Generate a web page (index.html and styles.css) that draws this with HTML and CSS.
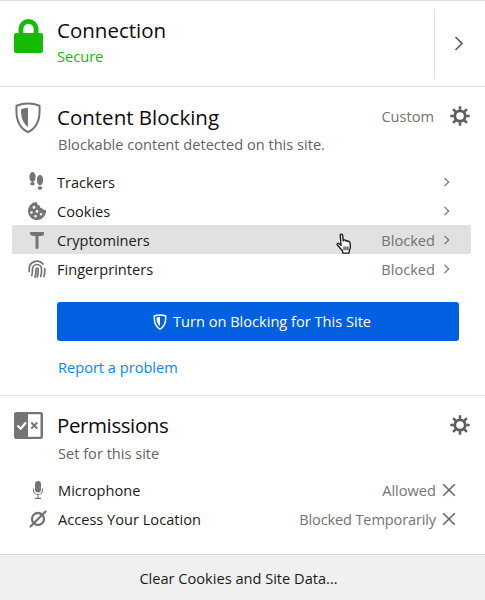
FILE: index.html
```html
<!DOCTYPE html>
<html lang="en">
<head>
<meta charset="utf-8">
<title>Site information</title>
<link rel="stylesheet" href="styles.css">
</head>
<body>
<svg class="defs" width="0" height="0" aria-hidden="true">
  <defs>
    <symbol id="gear" viewBox="0 0 20 20">
      <circle cx="10" cy="10" r="5.200" fill="none" stroke="#5c5c61" stroke-width="2.800"/>
      <path fill="none" stroke="#5c5c61" stroke-width="2.500" d="M10 .3v3.500M10 16.200v3.500M.3 10h3.500M16.200 10h3.500M3.100 3.100l2.500 2.500M14.400 14.400l2.500 2.500M16.900 3.100l-2.500 2.500M5.600 14.400l-2.500 2.500"/>
    </symbol>
    <symbol id="close" viewBox="0 0 14 14">
      <path fill="none" stroke="#66666b" stroke-width="1.600" d="M1.200 1.200l11.600 11.600M12.800 1.200L1.200 12.800"/>
    </symbol>
    <symbol id="chev" viewBox="0 0 8 12">
      <path fill="none" stroke="#737378" stroke-width="1.200" d="M1.500 1.800L5.700 6l-4.200 4.200"/>
    </symbol>
  </defs>
</svg>

<main class="panel">
  <section class="connection">
    <svg class="icon-lock" viewBox="0 0 29 34">
      <path fill="#12bc00" fill-rule="evenodd" d="M4.500 14V10a10 10 0 0 1 20 0v4H27a2 2 0 0 1 2 2v16a2 2 0 0 1-2 2H2a2 2 0 0 1-2-2V16a2 2 0 0 1 2-2zM9.300 14h10.400V10a5.200 5.200 0 0 0-10.400 0z"/>
    </svg>
    <div class="connection-text">
      <h2 class="heading">Connection</h2>
      <p class="secure">Secure</p>
    </div>
    <div class="connection-more">
      <svg class="chev-big" viewBox="0 0 10 15"><path fill="none" stroke="#5c5c61" stroke-width="1.700" d="M1.500 1L8 7.500 1.500 14"/></svg>
    </div>
  </section>

  <section class="blocking">
    <div class="title-row">
      <svg class="icon-head" viewBox="0 0 28 32">
        <path fill="none" stroke="#737378" stroke-width="2" d="M14 1.500c4 0 8 .8 11.500 2.200.5 10-.2 21-11.500 26.500C2.700 24.700 2 13.700 2.500 3.700 6 2.300 10 1.500 14 1.500z"/>
        <path fill="#737378" d="M14 6c-3 0-5 .4-7 1.200 0 6.800 1 13.300 7 17.800z"/>
      </svg>
      <h2 class="heading grow">Content Blocking</h2>
      <span class="muted custom">Custom</span>
      <svg class="gear"><use href="#gear"/></svg>
    </div>
    <p class="sub">Blockable content detected on this site.</p>

    <ul class="rows">
      <li class="row">
        <svg class="row-icon row-icon-tall" viewBox="0 0 18 20">
          <g fill="#737378">
            <ellipse cx="4.500" cy="5" rx="3.100" ry="5"/><ellipse cx="4.500" cy="11.800" rx="2.300" ry="1.700"/>
            <ellipse cx="12" cy="8" rx="3.100" ry="5.300"/><ellipse cx="12" cy="16" rx="2.300" ry="1.800"/>
          </g>
        </svg>
        <span class="row-label">Trackers</span>
        <svg class="chev"><use href="#chev"/></svg>
      </li>
      <li class="row">
        <svg class="row-icon" viewBox="0 0 18 18">
          <path fill="#737378" fill-rule="evenodd" d="M8.500.1c.3 2 1.500 3.200 3 3.500.2 1.800 1.500 3 3 3 .5 1 1.500 1.500 3.400 1.500A9 9 0 1 1 8.500.1zM6 3.800a1.500 1.500 0 1 0 0 3 1.500 1.500 0 0 0 0-3zM3.500 9.200a1.300 1.300 0 1 0 0 2.600 1.300 1.300 0 0 0 0-2.600zM9 8a1.400 1.400 0 1 0 0 2.800A1.400 1.400 0 0 0 9 8zM13 11a1.300 1.300 0 1 0 0 2.600 1.300 1.300 0 0 0 0-2.600zM7.500 13a1.300 1.300 0 1 0 0 2.600 1.300 1.300 0 0 0 0-2.600z"/>
        </svg>
        <span class="row-label">Cookies</span>
        <svg class="chev"><use href="#chev"/></svg>
      </li>
      <li class="row row-hover">
        <svg class="row-icon" viewBox="0 0 18 18">
          <path fill="#737378" d="M2 1h14v1.800c0 1.200-.8 2.200-2 2.200h-3.500v11.500a1.500 1.500 0 0 1-3 0V5H5.500C4 5 2.800 4.200 2 3z"/>
        </svg>
        <span class="row-label">Cryptominers</span>
        <span class="muted">Blocked</span>
        <svg class="chev"><use href="#chev"/></svg>
        <svg class="cursor" viewBox="0 0 20 24">
          <path fill="#fff" stroke="#1a1a1a" stroke-width="1.400" stroke-linejoin="round" d="M5 2.200c0-1.400 2.300-1.400 2.500 0l.7 6 .5-.6c.6-.8 1.900-.5 2.100.4l.2.500c.5-.7 1.800-.5 2.100.4.600-.5 1.700-.2 1.900.7l.6 3.600c.3 2-.3 3.500-1 5l-.5 2.800H7.800l-.5-2.500L2 12.500c-.8-1 .3-2.400 1.500-1.600l2.400 2z"/>
          <path fill="none" stroke="#1a1a1a" stroke-width="1.100" d="M9 14v4M11 14v4M13 14v4"/>
        </svg>
      </li>
      <li class="row">
        <svg class="row-icon" viewBox="0 0 18 18">
          <g fill="none" stroke="#737378" stroke-width="1.700" stroke-linecap="round">
            <path d="M1.200 11.500V9A7.800 7.800 0 0 1 15 4"/>
            <path d="M16.800 8.500V11c0 2-.4 4-1 5.500"/>
            <path d="M3.800 15.500c.6-1.500.7-4 .7-6.500a4.500 4.500 0 0 1 9 0v3c0 1.500-.3 3-.8 4.500"/>
            <path d="M7 17c.8-2 1.100-4.500 1.100-8a1 1 0 0 1 2 0v3c0 2-.4 3.500-1 5"/>
          </g>
        </svg>
        <span class="row-label">Fingerprinters</span>
        <span class="muted">Blocked</span>
        <svg class="chev"><use href="#chev"/></svg>
      </li>
    </ul>

    <button class="cta" type="button">
      <svg class="cta-icon" viewBox="0 0 14 16">
        <path fill="none" stroke="#fff" stroke-width="1.500" d="M7 .9c2 0 4 .4 5.700 1.100.3 5.300-.2 10.400-5.700 13.100C1.500 12.400 1 7.300 1.300 2 3 1.300 5 .9 7 .9z"/>
        <path fill="#fff" d="M7 3c-1.300 0-2.400.2-3.500.6 0 3.400.5 6.400 3.500 8.600z"/>
      </svg>
      Turn on Blocking for This Site
    </button>
    <a class="report" href="#">Report a problem</a>
  </section>

  <section class="permissions">
    <div class="title-row">
      <svg class="icon-perm" viewBox="0 0 29 27">
        <path fill="#737378" d="M2.500 0h24A2.500 2.500 0 0 1 29 2.500v22a2.500 2.500 0 0 1-2.500 2.500h-24A2.500 2.500 0 0 1 0 24.500v-22A2.500 2.500 0 0 1 2.500 0z"/>
        <rect fill="#fff" x="14" y="2.200" width="12.500" height="22.600"/>
        <path fill="none" stroke="#fff" stroke-width="2.200" d="M3.500 13.500l3.200 3.200L12 10.500"/>
        <path fill="none" stroke="#737378" stroke-width="1.800" d="M17.300 10.500l6 6M23.300 10.500l-6 6"/>
      </svg>
      <h2 class="heading grow heading-tight">Permissions</h2>
      <svg class="gear"><use href="#gear"/></svg>
    </div>
    <p class="sub">Set for this site</p>

    <ul class="rows perm-rows">
      <li class="row">
        <svg class="row-icon" viewBox="0 0 18 18">
          <rect x="6" y="0" width="6" height="11.500" rx="3" fill="#737378"/>
          <path fill="none" stroke="#737378" stroke-width="1.100" d="M4.500 7.500v1.500a4.500 4.500 0 0 0 9 0V7.500M9 13.500v3.500M6 17.400h6"/>
        </svg>
        <span class="row-label">Microphone</span>
        <span class="muted">Allowed</span>
        <svg class="x"><use href="#close"/></svg>
      </li>
      <li class="row">
        <svg class="row-icon" viewBox="0 0 18 18">
          <g fill="none" stroke="#737378" stroke-width="2.300">
            <circle cx="9" cy="9" r="6"/>
            <path stroke-linecap="round" d="M1.500 16.500L16.500 1.500"/>
          </g>
        </svg>
        <span class="row-label">Access Your Location</span>
        <span class="muted tight">Blocked Temporarily</span>
        <svg class="x"><use href="#close"/></svg>
      </li>
    </ul>
  </section>

  <footer class="footer">Clear Cookies and Site Data...</footer>
</main>
</body>
</html>
```

FILE: styles.css
```css
* { box-sizing: border-box; }

html, body {
  margin: 0;
  padding: 0;
  background: #fff;
}

body {
  font-family: "Open Sans", "Noto Sans", "Liberation Sans", sans-serif;
  font-size: 14.600px;
  color: #1a1a1a;
}

.defs { display: block; height: 0; }

.panel {
  width: 485px;
  height: 600px;
  display: flex;
  flex-direction: column;
  border-top: 1px solid #e0e0e1;
  overflow: hidden;
}

h2, p, ul { margin: 0; padding: 0; }
ul { list-style: none; }

.heading {
  font-size: 20.500px;
  font-weight: 400;
  line-height: 28px;
  color: #0c0c0d;
}

.heading-tight { letter-spacing: -.4px; }

.tight { letter-spacing: -.15px; }

.grow { flex: 1; }

.muted { color: #737373; }

/* Connection */
.connection {
  height: 86px;
  display: flex;
  align-items: center;
  padding-left: 14px;
  border-bottom: 1px solid #e0e0e1;
}

.icon-lock { width: 29px; height: 34px; margin-top: -15px; flex: none; }

.connection-text { flex: 1; margin-left: 14px; margin-top: -4px; }

.secure { color: #12bc00; line-height: 24px; }

.connection-more {
  width: 51px;
  height: 70px;
  border-left: 1px solid #e0e0e1;
  display: flex;
  align-items: center;
  justify-content: center;
  padding-right: 2px;
}

.chev-big { width: 10px; height: 15px; }

/* Content blocking */
.blocking {
  height: 309px;
  padding-top: 14px;
  border-bottom: 1px solid #e6e6e7;
  display: flex;
  flex-direction: column;
}

.title-row {
  display: flex;
  align-items: center;
  height: 32px;
  padding: 0 16px 0 14px;
}

.icon-head { width: 28px; height: 32px; margin: 1px 15px 0 0; flex: none; }

.custom { margin-right: 16px; margin-top: -2px; }

.gear { width: 20px; height: 20px; flex: none; margin-top: -2px; margin-right: -1px; }

.sub {
  margin-left: 58px;
  color: #636367;
  line-height: 22px;
}

.rows { padding: 0 14px 0 12px; margin-top: 12px; }

.row {
  position: relative;
  display: flex;
  align-items: center;
  height: 29px;
  padding: 0 20px 0 16px;
  border-radius: 2px;
}

.row-hover { background: #e1e1e2; }

.row-icon { width: 18px; height: 18px; flex: none; }

.row-icon-tall { height: 20px; }

.row-label { flex: 1; margin-left: 11px; color: #1a1a1a; }

.chev { width: 8px; height: 12px; margin-left: 8px; flex: none; }

.x { width: 14px; height: 14px; margin-left: 6px; flex: none; }

.cursor {
  position: absolute;
  left: 323px;
  top: 8px;
  width: 20px;
  height: 23px;
}

.cta {
  margin: 19px 26px 0 57px;
  height: 39px;
  border: 0;
  border-radius: 3px;
  background: #0060df;
  color: #fff;
  font: inherit;
  display: flex;
  align-items: center;
  justify-content: center;
  gap: 6px;
  padding: 0 0 2px 8px;
}

.cta-icon { width: 14px; height: 16px; margin-top: 2px; }

.report {
  margin: 15px 0 0 58px;
  color: #0a84ff;
  text-decoration: none;
  line-height: 22px;
}

/* Permissions */
.permissions {
  flex: 1;
  padding-top: 13px;
}

.permissions .gear { margin-top: 0; }

.permissions .sub { margin-top: 1px; }

.icon-perm { width: 29px; height: 27px; margin: 1px 14px 0 0; flex: none; }

.perm-rows { padding: 0 29px 0 12px; margin-top: 11px; }
.perm-rows .row { padding-right: 0; }
.perm-rows .row-icon { margin-left: 1px; }
.perm-rows .row-label { margin-left: 11px; }

/* Footer */
.footer {
  height: 46px;
  flex: none;
  background: #f0f0f1;
  border-top: 1px solid #d7d7d8;
  display: flex;
  align-items: center;
  justify-content: center;
  padding: 0 8px 0 0;
  color: #1a1a1a;
}
```
